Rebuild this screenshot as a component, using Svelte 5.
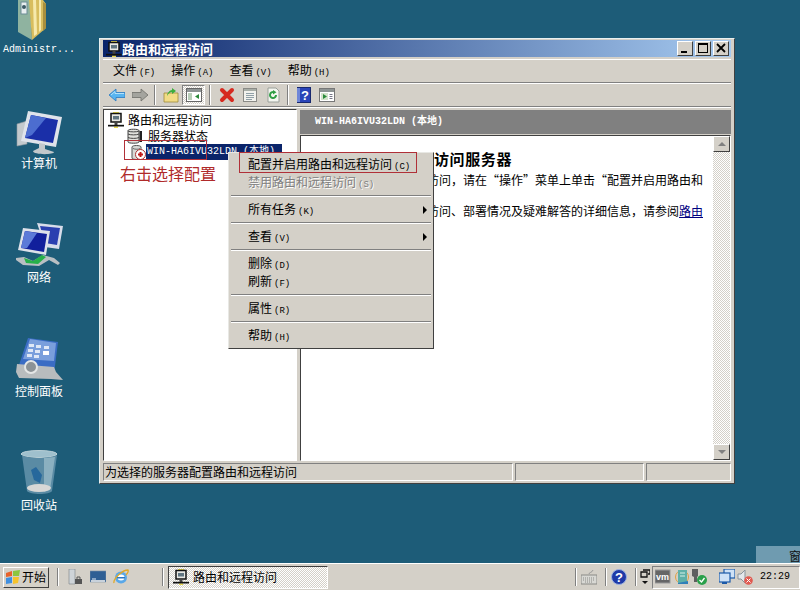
<script>
	const menuTitles = [
		{ label: '文件', key: 'F' },
		{ label: '操作', key: 'A' },
		{ label: '查看', key: 'V' },
		{ label: '帮助', key: 'H' }
	];

	// sep = divider row, arrow = has submenu
	const contextItems = [
		{ label: '配置并启用路由和远程访问', key: 'C' },
		{ label: '禁用路由和远程访问', key: 'S', disabled: true },
		{ sep: true },
		{ label: '所有任务', key: 'K', arrow: true },
		{ sep: true },
		{ label: '查看', key: 'V', arrow: true },
		{ sep: true },
		{ label: '删除', key: 'D' },
		{ label: '刷新', key: 'F' },
		{ sep: true },
		{ label: '属性', key: 'R' },
		{ sep: true },
		{ label: '帮助', key: 'H' }
	];
</script>

{#snippet routerIcon()}
	<svg class="ico16" viewBox="0 0 16 16">
		<path d="M5 0h6v1.500H5zM6 14.500h4V16H6z" fill="#e8d84a" />
		<path d="M3 1.500h10v8.500H3z" fill="#e8e8e4" stroke="#111" stroke-width="1.500" />
		<rect x="5" y="4" width="6" height="3.500" fill="#5f7480" />
		<path d="M6.500 10h3v3h-3z" fill="#444" />
		<path d="M0 12.800h16v1.700H0z" fill="#111" />
	</svg>
{/snippet}

<div class="screen">
	<div class="desktop">
		<div class="icons">
			<div class="dicon">
				<svg class="ico48" viewBox="0 0 48 48">
					<path d="M3 6h12l2 40-14-8z" fill="#8fb3a0" />
					<rect x="6" y="8" width="6" height="12" fill="#e8eef0" stroke="#6d8d96" />
					<circle cx="9" cy="13" r="2" fill="#3d5a66" />
					<path d="M14 6h14l3 4v24l-14 12z" fill="#d8bd5e" />
					<path d="M18 6h3l1 34-3 2zM24 6h2v30l-2 2z" fill="#f6e9ac" />
					<path d="M28 8l3 2v24l-3 3z" fill="#a88f3e" />
				</svg>
				<span>Administr...</span>
			</div>
			<div class="dicon">
				<svg class="ico48" viewBox="0 0 48 48">
					<path d="M2 16l10-3v23l-10 2z" fill="#c3c9cd" stroke="#8d979e" stroke-width=".6" />
					<path d="M13 3l34 6-6 30-35-6z" fill="#dfe3ea" />
					<path d="M16 7l27 5-5 23-28-5z" fill="#1a2fa8" />
					<path d="M16 7l15 3-14 17-7 3z" fill="#4c6dd0" />
					<path d="M24 35l6 1v5l9 3c0 3-21 3-21-1l6-3z" fill="#c2c8cb" />
				</svg>
				<span>计算机</span>
			</div>
			<div class="dicon">
				<svg class="ico48" viewBox="0 0 48 48">
					<path d="M22 1l26 3-4 23-14-2z" fill="#d7dcea" />
					<path d="M25 4l20 2-3 17-12-2z" fill="#2a3fb0" />
					<path d="M8 6l27 3-4 24-28-5z" fill="#dde1ea" />
					<path d="M10 9l22 3-3 18-23-4z" fill="#111f9c" />
					<path d="M10 9l12 2-10 15-6 0z" fill="#5c7ad8" />
					<path d="M1 36l8-1 9 4 10-6 11 3 6 5-2 2-9-5-10 6-16-1-7-5z" fill="#b9bfc3" />
					<path d="M9 36l9 3 9-6 4 2-8 7-12-1z" fill="#27b04a" />
				</svg>
				<span>网络</span>
			</div>
			<div class="dicon">
				<svg class="ico48" viewBox="0 0 48 48">
					<path d="M13 2l30 4-4 32-37-3z" fill="#3a6cc4" />
					<path d="M15 3l26 4-2 18-31-2z" fill="#7a9fdc" />
					<g fill="#dfe8f6">
						<rect x="14" y="8" width="5" height="3" /><rect x="21" y="9" width="5" height="3" /><rect x="29" y="10" width="5" height="3" />
						<rect x="13" y="13" width="5" height="3" /><rect x="20" y="14" width="5" height="3" /><rect x="28" y="15" width="6" height="4" fill="#fff" />
						<rect x="12" y="18" width="5" height="3" /><rect x="19" y="19" width="5" height="3" />
					</g>
					<path d="M2 28l37 3 2 5 7 8-12-1-32-1-3-6z" fill="#b8bcbe" />
					<circle cx="16" cy="31" r="6" fill="#8c9296" stroke="#e4e6e6" stroke-width="2" />
				</svg>
				<span>控制面板</span>
			</div>
			<div class="dicon">
				<svg class="ico48" viewBox="0 0 48 48">
					<g transform="translate(2 0)">
						<ellipse cx="22" cy="4" rx="18" ry="3.500" fill="#9fc0cd" stroke="#b9cfd6" />
						<path d="M5 5c5 4 29 4 35 0l-5 36c-2 4-22 4-25 0z" fill="#5a8ba4" />
						<path d="M27 8l11-1-5 33-6 2z" fill="#8bb0c0" />
						<path d="M14 20l5-3 6 8-2 8-6-3z" fill="#27689c" />
						<ellipse cx="22" cy="38" rx="12" ry="4" fill="#d8d8d6" />
					</g>
				</svg>
				<span>回收站</span>
			</div>
		</div>

		<div class="window">
			<div class="titlebar">
				{@render routerIcon()}
				<b>路由和远程访问</b>
				<div class="caption">
					<button aria-label="min"><i class="min"></i></button>
					<button aria-label="max"><i class="max"></i></button>
					<button class="close" aria-label="close">
						<svg viewBox="0 0 10 10"><path d="M1 1l8 8M9 1l-8 8" stroke="#000" stroke-width="1.8" /></svg>
					</button>
				</div>
			</div>

			<div class="menubar">
				{#each menuTitles as m}
					<span>{m.label}<small>({m.key})</small></span>
				{/each}
			</div>

			<div class="toolbar">
				<div class="tool">
					<svg class="ico16" viewBox="0 0 16 16">
						<path d="M0 8l7-6v3.500h9v5H7V14z" fill="#58b4f0" stroke="#2a78c0" stroke-width=".8" />
						<path d="M2 8l4-3.500v2h9" fill="none" stroke="#b4e2fa" />
					</svg>
				</div>
				<div class="tool">
					<svg class="ico16" viewBox="0 0 16 16"><path d="M16 8L9 2v3.500H0v5h9V14z" fill="#a4a49e" stroke="#6e6e68" stroke-width=".8" /></svg>
				</div>
				<div class="tsep"></div>
				<div class="tool">
					<svg class="ico16" viewBox="0 0 16 16">
						<path d="M1 6h14v9H1z" fill="#f2dc86" stroke="#a08a3a" stroke-width=".8" />
						<path d="M4 9c0-3 3-6 5-6V1l4 3-4 3V5c-2 0-4 2-5 4z" fill="#3cae3c" />
					</svg>
				</div>
				<div class="tool active">
					<svg class="ico16" viewBox="0 0 16 16">
						<rect x="0.500" y="1.500" width="15" height="13" fill="#fff" stroke="#666" />
						<path d="M1 2h14v3H1z" fill="#8e9494" />
						<path d="M2 6h4v7H2z" fill="#b8ceb8" />
						<path d="M13 7v5l-4-2.500z" fill="#2a8a3a" />
					</svg>
				</div>
				<div class="tsep wide"></div>
				<div class="tool">
					<svg class="ico16" viewBox="0 0 16 16"><path d="M3 3l10 10M13 3L3 13" stroke="#d62a20" stroke-width="4" stroke-linecap="round" /></svg>
				</div>
				<div class="tool">
					<svg class="ico16" viewBox="0 0 16 16">
						<rect x="1.500" y="1.500" width="13" height="13" fill="#f2f2ee" stroke="#8a8a86" />
						<path d="M2 2h12v2H2z" fill="#a8aea8" />
						<path d="M4 6.500h8M4 8.500h8M4 10.500h8M4 12.500h6" stroke="#90a0a8" />
					</svg>
				</div>
				<div class="tool">
					<svg class="ico16" viewBox="0 0 16 16">
						<path d="M3 1h8l3 3v11H3z" fill="#f4f6f0" stroke="#9aa09a" />
						<path d="M11 8a3 3 0 1 1-2-2.800" fill="none" stroke="#2f9e44" stroke-width="2" />
						<path d="M8 3l3.500 2.200L8 7.500z" fill="#2f9e44" />
					</svg>
				</div>
				<div class="tsep"></div>
				<div class="tool">
					<svg class="ico16" viewBox="0 0 16 16">
						<rect x="1.500" y="0.500" width="13" height="15" fill="#2a44b8" stroke="#18286e" />
						<path d="M1 1h3v14H1z" fill="#6f86d8" />
						<text x="9" y="13" text-anchor="middle" class="qmark">?</text>
					</svg>
				</div>
				<div class="tool">
					<svg class="ico16" viewBox="0 0 16 16">
						<rect x="0.500" y="1.500" width="15" height="13" fill="#fff" stroke="#777" />
						<path d="M1 2h14v3H1z" fill="#8e9494" />
						<path d="M2 6h7v7H2z" fill="#d4e4cc" />
						<path d="M4 7v5l4-2.500z" fill="#2a8a3a" />
						<path d="M10.500 7.500h3M10.500 9.500h3M10.500 11.500h3" stroke="#778" />
					</svg>
				</div>
			</div>

			<div class="panes">
				<div class="tree">
					<div class="row">{@render routerIcon()}<span>路由和远程访问</span></div>
					<div class="row child">
						<svg class="ico16" viewBox="0 0 16 16">
							<path d="M1 2.500C1 .8 12 .8 12 2.500V14c0 1.600-11 1.600-11 0z" fill="#e0e0dc" stroke="#444" />
							<path d="M1 6c2 1.200 9 1.200 11 0M1 9.500c2 1.200 9 1.200 11 0M1 3c2 1.200 9 1.200 11 0" fill="none" stroke="#444" />
							<path d="M12.500 3H15v11h-2.500z" fill="#222" />
						</svg>
						<span>服务器状态</span>
					</div>
					<div class="row node">
						<svg class="ico16" viewBox="0 0 16 16">
							<path d="M2 3C2 1 11 1 11 3v11c0 2-9 2-9 0z" fill="#d9d9d6" stroke="#555" />
							<path d="M3 4.500c2 1 6 1 7 0" fill="none" stroke="#666" />
							<circle cx="10.500" cy="10.500" r="5" fill="#fff" stroke="#a33" />
							<path d="M8 10.500h5M10.500 8v5" stroke="#c01818" stroke-width="2" />
						</svg>
						<span class="selected">WIN-HA6IVU32LDN (本地)</span>
					</div>
					<div class="note">右击选择配置</div>
					<div class="mark"></div>
				</div>
				<div class="detail">
					<div class="detail-head">WIN-HA6IVU32LDN (本地)</div>
					<div class="detail-body">
						<div class="page">
							<h1>访问服务器</h1>
							<p>访问，请在“操作”菜单上单击“配置并启用路由和</p>
							<p class="second">访问、部署情况及疑难解答的详细信息，请参阅<a href="#top">路由</a></p>
						</div>
						<div class="scroll">
							<div class="sbtn"><i class="up"></i></div>
							<div class="track"></div>
							<div class="sbtn"><i class="down"></i></div>
						</div>
					</div>
				</div>
			</div>

			<div class="status">
				<div class="cell main">为选择的服务器配置路由和远程访问</div>
				<div class="cell mid"></div>
				<div class="cell end"></div>
			</div>

			<div class="context">
				{#each contextItems as item}
					{#if item.sep}
						<div class="csep"></div>
					{:else}
						<div class="citem" class:disabled={item.disabled}>
							<span>{item.label}<small>({item.key})</small></span>
							{#if item.arrow}<i class="arrow"></i>{/if}
						</div>
					{/if}
				{/each}
				<div class="cmark"></div>
			</div>
		</div>

		<div class="ime"><span>窗</span></div>
	</div>

	<div class="taskbar">
		<div class="start">
			<svg class="ico16" viewBox="0 0 16 16">
				<path d="M1 4l6-2v5l-6 1z" fill="#e8622a" />
				<path d="M8 2l7-1-1 6-6 0z" fill="#8cc63f" />
				<path d="M1 9l6-1v6l-6 1z" fill="#3f8fe0" />
				<path d="M8 8h6l-1 6-5 1z" fill="#f6c32c" />
			</svg>
			<span>开始</span>
		</div>
		<div class="grip"></div>
		<svg class="ico16 q1" viewBox="0 0 16 16">
			<path d="M2 0h6v15H2z" fill="#cfd4d8" stroke="#7a8288" stroke-width=".6" />
			<path d="M8 10h7v5H8z" fill="#555" />
			<path d="M10 10V8h3v2" fill="none" stroke="#555" />
		</svg>
		<svg class="ico16 q2" viewBox="0 0 16 16">
			<rect x="0" y="2" width="16" height="11" fill="#2f5f94" stroke="#7b8fa6" stroke-width=".6" />
			<path d="M1 11h14v2H1z" fill="#c8d2dc" />
			<path d="M2 10h4" stroke="#e8eef4" />
		</svg>
		<svg class="ico16 q3" viewBox="0 0 16 16">
			<ellipse cx="8" cy="8.500" rx="6" ry="6" fill="#5aa8e8" />
			<ellipse cx="8" cy="8.500" rx="3.500" ry="3" fill="#fff" />
			<path d="M4 8h8v1.500H4z" fill="#2a78c4" />
			<path d="M1 14C0 10 9 1 15 1c1 2-1 4-2 5" fill="none" stroke="#e0a92a" stroke-width="1.300" />
		</svg>
		<div class="grip g2"></div>
		<div class="task">
			{@render routerIcon()}
			<span>路由和远程访问</span>
		</div>
		<div class="spacer"></div>
		<div class="grip"></div>
		<svg class="ico16" viewBox="0 0 16 16">
			<path d="M8 5c0-2 3-1 4-4" fill="none" stroke="#999" />
			<rect x="0" y="6" width="16" height="9" fill="#d8d8d4" stroke="#8a8a86" />
			<path d="M2 9h12M2 11h12M4 13h8" stroke="#8a8a86" stroke-dasharray="1 1" />
		</svg>
		<div class="grip"></div>
		<svg class="ico16" viewBox="0 0 16 16">
			<circle cx="8" cy="8" r="7.500" fill="#1f3aa8" stroke="#9ab0e0" />
			<text x="8" y="12.500" text-anchor="middle" class="qmark">?</text>
		</svg>
		<div class="grip"></div>
		<div class="switch">
			<svg class="sw" viewBox="0 0 10 16">
				<path d="M3 1h7v4H8M1 3h6v5H1z" fill="none" stroke="#111" stroke-width="1.300" />
				<path d="M2 12h6l-3 3z" fill="#111" />
			</svg>
		</div>
		<div class="tray">
			<svg class="ico16" viewBox="0 0 16 16">
				<rect x="0" y="1" width="15" height="13" fill="#666" stroke="#999" />
				<text x="7.500" y="11" text-anchor="middle" class="vm">vm</text>
			</svg>
			<svg class="ico16 t2" viewBox="0 0 16 16">
				<circle cx="7" cy="8" r="6.500" fill="none" stroke="#e0a040" />
				<rect x="3" y="1" width="9" height="13" fill="#5fb0a8" />
				<path d="M5 4h5M5 7h5" stroke="#d8f0e8" />
				<path d="M3 14l10-2v3H3z" fill="#2f7fb8" />
			</svg>
			<svg class="ico16" viewBox="0 0 16 16">
				<path d="M1 0h6v7l-1 1v5H3V8L1 7z" fill="#5e5e5e" />
				<circle cx="11" cy="11" r="5" fill="#2aa04a" />
				<path d="M8.500 11l2 2 3-4" fill="none" stroke="#fff" stroke-width="1.300" />
			</svg>
			<svg class="ico16 t4" viewBox="0 0 16 16">
				<rect x="5" y="0" width="11" height="9" fill="#cfe2f6" stroke="#1c5aa8" stroke-width="1.200" />
				<rect x="0" y="4" width="11" height="9" fill="#cfe2f6" stroke="#1c5aa8" stroke-width="1.200" />
				<path d="M3 13v2h5v-2" fill="#1c5aa8" />
			</svg>
			<svg class="ico16 t5" viewBox="0 0 16 16">
				<path d="M1 5h3l4-4v13l-4-4H1z" fill="#e4e8ec" stroke="#8a949c" />
				<circle cx="11.500" cy="11.500" r="4.300" fill="#e05a50" />
				<path d="M9.500 9.500l4 4m0-4l-4 4" stroke="#fff" />
			</svg>
			<span class="clock">22:29</span>
		</div>
	</div>
</div>

<style>
	:global(body) {
		margin: 0;
	}

	.screen {
		width: 800px;
		height: 590px;
		overflow: hidden;
		display: flex;
		flex-direction: column;
		background: #1d5c78;
		font: 12px/14px 'Noto Sans CJK SC', 'Liberation Sans', sans-serif;
		color: #000;
	}

	small {
		font: 9px/14px 'Liberation Mono', monospace;
		margin-left: 2px;
	}

	i {
		display: block;
	}

	.ico16 {
		width: 16px;
		height: 16px;
		flex: none;
		display: block;
	}

	.desktop {
		position: relative;
		flex: 1;
	}

	/* desktop icons */
	.icons {
		position: absolute;
		left: 0;
		top: -6px;
		width: 78px;
		display: flex;
		flex-direction: column;
	}

	.dicon {
		height: 114px;
		display: flex;
		flex-direction: column;
		align-items: center;
		color: #fff;
	}

	.ico48 {
		width: 48px;
		height: 48px;
		display: block;
	}

	.dicon span {
		white-space: nowrap;
	}

	.dicon:first-child span {
		font: 10px/14px 'Liberation Mono', monospace;
		margin-top: 1px;
	}

	/* window */
	.window {
		position: absolute;
		left: 99px;
		top: 38px;
		width: 636px;
		height: 446px;
		box-sizing: border-box;
		padding: 2px 3px 3px 3px;
		background: #d4d0c8;
		border-top: 1px solid #e8f0f0;
		border-left: 1px solid #e8f0f0;
		border-right: 1px solid #404040;
		border-bottom: 1px solid #404040;
		display: flex;
		flex-direction: column;
	}

	.titlebar {
		height: 17px;
		flex: none;
		display: flex;
		align-items: center;
		padding-left: 3px;
		margin-top: -1px;
		background: linear-gradient(90deg, #0a246a, #a6caf0);
		color: #fff;
		font-size: 13px;
		line-height: 15px;
	}

	.caption {
		margin-left: auto;
		display: flex;
		gap: 2px;
		padding-right: 2px;
	}

	.caption button {
		width: 16px;
		height: 15px;
		padding: 0;
		background: #d4d0c8;
		border: 1px solid;
		border-color: #fff #404040 #404040 #fff;
		position: relative;
		display: block;
	}

	.min {
		position: absolute;
		left: 3px;
		bottom: 2px;
		width: 6px;
		height: 2px;
		background: #000;
	}

	.max {
		position: absolute;
		left: 2px;
		top: 1px;
		width: 10px;
		height: 10px;
		box-sizing: border-box;
		border: 1px solid #000;
		border-top-width: 2px;
	}

	.close svg {
		position: absolute;
		left: 2px;
		top: 1px;
		width: 10px;
		height: 10px;
	}

	.menubar {
		height: 24px;
		flex: none;
		box-sizing: border-box;
		margin-top: 2px;
		padding-left: 10px;
		display: flex;
		align-items: center;
		gap: 16px;
		border-top: 1px solid #fff;
		border-bottom: 1px solid #808080;
		box-shadow: 0 1px 0 #fff;
	}

	.toolbar {
		height: 24px;
		flex: none;
		box-sizing: border-box;
		padding-left: 2px;
		display: flex;
		align-items: center;
		border-bottom: 1px solid #808080;
		box-shadow: 0 1px 0 #fff;
	}

	.tool {
		width: 23px;
		height: 20px;
		box-sizing: border-box;
		display: flex;
		align-items: center;
		justify-content: center;
	}

	.tool.active {
		border: 1px solid;
		border-color: #808080 #fff #fff #808080;
		background: repeating-conic-gradient(#d4d0c8 0 25%, #fff 0 50%) 0 0 / 2px 2px;
	}

	.tsep {
		width: 2px;
		height: 20px;
		margin: 0 3px;
		box-sizing: border-box;
		border-left: 1px solid #808080;
		border-right: 1px solid #fff;
	}

	.tsep.wide {
		margin: 0 4px;
	}

	.qmark {
		font: bold 13px 'Liberation Sans', sans-serif;
		fill: #fff;
	}

	.vm {
		font: bold 9px 'Liberation Sans', sans-serif;
		fill: #fff;
	}

	.panes {
		height: 352px;
		flex: none;
		margin-top: 2px;
		display: flex;
		gap: 3px;
	}

	.tree {
		width: 194px;
		flex: none;
		box-sizing: border-box;
		position: relative;
		background: #fff;
		padding: 2px 0 0 4px;
		border: 1px solid;
		border-color: #404040 #fff #fff #404040;
	}

	.row {
		height: 16px;
		display: flex;
		align-items: center;
		gap: 4px;
		white-space: nowrap;
	}

	.row.child {
		padding-left: 19px;
		gap: 5px;
	}

	.row.node {
		padding-left: 22px;
		gap: 0;
	}

	.selected {
		background: #0a246a;
		color: #fff;
		height: 16px;
		width: 136px;
		box-sizing: border-box;
		padding-left: 1px;
		line-height: 16px;
		font-family: 'Liberation Mono', 'Noto Sans CJK SC', monospace;
		font-size: 10px;
		flex: none;
	}

	.note {
		margin: 3px 0 0 12px;
		color: #b02a2a;
		font-size: 16px;
		line-height: 20px;
	}

	.mark {
		position: absolute;
		left: 20px;
		top: 30px;
		width: 83px;
		height: 20px;
		box-sizing: border-box;
		border: 1px solid #b03038;
	}

	.detail {
		flex: 1;
		display: flex;
		flex-direction: column;
		min-width: 0;
	}

	.detail-head {
		height: 24px;
		flex: none;
		margin-top: 1px;
		padding-left: 15px;
		background: #808080;
		color: #fff;
		font: bold 10px/24px 'Liberation Mono', 'Noto Sans CJK SC', monospace;
	}

	.detail-body {
		flex: 1;
		min-height: 0;
		margin-top: 1px;
		background: #fff;
		display: flex;
		border: 1px solid;
		border-color: #404040 #fff #fff #404040;
	}

	.page {
		flex: 1;
		min-width: 0;
		box-sizing: border-box;
		padding: 13px 10px 0 0;
		white-space: nowrap;
		text-align: right;
	}

	h1 {
		margin: 0;
		padding-left: 133px;
		text-align: left;
		font-size: 15px;
		line-height: 20px;
		font-weight: 700;
		letter-spacing: 0.6px;
	}

	p {
		margin: 4px 0 0;
		font-size: 12px;
		line-height: 14px;
	}

	p.second {
		margin-top: 17px;
	}

	a {
		color: #00007f;
	}

	.scroll {
		width: 17px;
		flex: none;
		display: flex;
		flex-direction: column;
	}

	.sbtn {
		height: 16px;
		flex: none;
		box-sizing: border-box;
		background: #d4d0c8;
		border: 1px solid;
		border-color: #fff #404040 #404040 #fff;
		display: flex;
		align-items: center;
		justify-content: center;
	}

	.up {
		border: 4px solid transparent;
		border-top: 0;
		border-bottom: 4px solid #808080;
	}

	.down {
		border: 4px solid transparent;
		border-bottom: 0;
		border-top: 4px solid #808080;
	}

	.track {
		flex: 1;
		background: repeating-conic-gradient(#d4d0c8 0 25%, #fff 0 50%) 0 0 / 2px 2px;
	}

	.status {
		height: 18px;
		flex: none;
		margin-top: 2px;
		display: flex;
		gap: 2px;
	}

	.cell {
		box-sizing: border-box;
		border: 1px solid;
		border-color: #808080 #fff #fff #808080;
		line-height: 16px;
		padding-left: 1px;
		white-space: nowrap;
	}

	.cell.main {
		width: 410px;
	}

	.cell.mid {
		width: 129px;
	}

	.cell.end {
		flex: 1;
	}

	/* context menu */
	.context {
		position: absolute;
		left: 128px;
		top: 113px;
		width: 206px;
		box-sizing: border-box;
		padding: 3px 0;
		background: #d4d0c8;
		border: 1px solid;
		border-color: #e8e8e4 #404040 #404040 #e8e8e4;
	}

	.citem {
		height: 18px;
		padding-left: 19px;
		display: flex;
		align-items: center;
		position: relative;
	}

	.citem.disabled {
		color: #808080;
		text-shadow: 1px 1px 0 #fff;
	}

	.arrow {
		position: absolute;
		right: 6px;
		top: 5px;
		border: 4px solid transparent;
		border-right: 0;
		border-left: 4px solid #000;
	}

	.csep {
		height: 2px;
		margin: 3px 2px 4px;
		background: #808080;
		border-bottom: 1px solid #fff;
		box-sizing: border-box;
	}

	.cmark {
		position: absolute;
		left: 10px;
		top: -1px;
		width: 178px;
		height: 21px;
		box-sizing: border-box;
		border: 1px solid #b03038;
	}

	.ime {
		position: absolute;
		right: 0;
		bottom: 0;
		width: 44px;
		height: 17px;
		background: #6f9bb0;
		overflow: hidden;
		text-align: right;
	}

	.ime span {
		margin-right: -1px;
		color: #111;
		line-height: 20px;
	}

	/* taskbar */
	.taskbar {
		height: 27px;
		flex: none;
		box-sizing: border-box;
		padding-left: 3px;
		background: #d4d0c8;
		border-top: 1px solid #fff;
		display: flex;
		align-items: center;
	}

	.start {
		width: 46px;
		height: 21px;
		box-sizing: border-box;
		display: flex;
		align-items: center;
		gap: 1px;
		padding-left: 1px;
		border: 1px solid;
		border-color: #fff #404040 #404040 #fff;
	}

	.grip {
		width: 2px;
		height: 18px;
		margin: 0 4px 0 8px;
		border-left: 1px solid #808080;
		border-right: 1px solid #fff;
		box-sizing: border-box;
		flex: none;
	}

	.q1 {
		margin-left: 4px;
	}

	.q2 {
		margin-left: 7px;
	}

	.q3 {
		margin-left: 7px;
	}

	.g2 {
		margin: 0 4px 0 33px;
	}

	.task {
		width: 160px;
		height: 23px;
		box-sizing: border-box;
		padding-left: 4px;
		display: flex;
		align-items: center;
		gap: 4px;
		border: 1px solid;
		border-color: #404040 #fff #fff #404040;
		background: repeating-conic-gradient(#d4d0c8 0 25%, #fff 0 50%) 0 0 / 2px 2px;
	}

	.spacer {
		flex: 1;
	}

	.sw {
		width: 10px;
		height: 16px;
		display: block;
	}

	.switch {
		margin-left: -1px;
	}

	.tray {
		width: 148px;
		height: 23px;
		box-sizing: border-box;
		margin-left: 2px;
		padding-left: 2px;
		display: flex;
		align-items: center;
		border: 1px solid;
		border-color: #808080 #fff #fff #808080;
	}

	.t2 {
		margin-left: 4px;
	}

	.t4 {
		margin-left: 12px;
	}

	.t5 {
		margin-left: 2px;
	}

	.clock {
		margin-left: 7px;
		font: 10px/14px 'Liberation Mono', monospace;
	}
</style>
